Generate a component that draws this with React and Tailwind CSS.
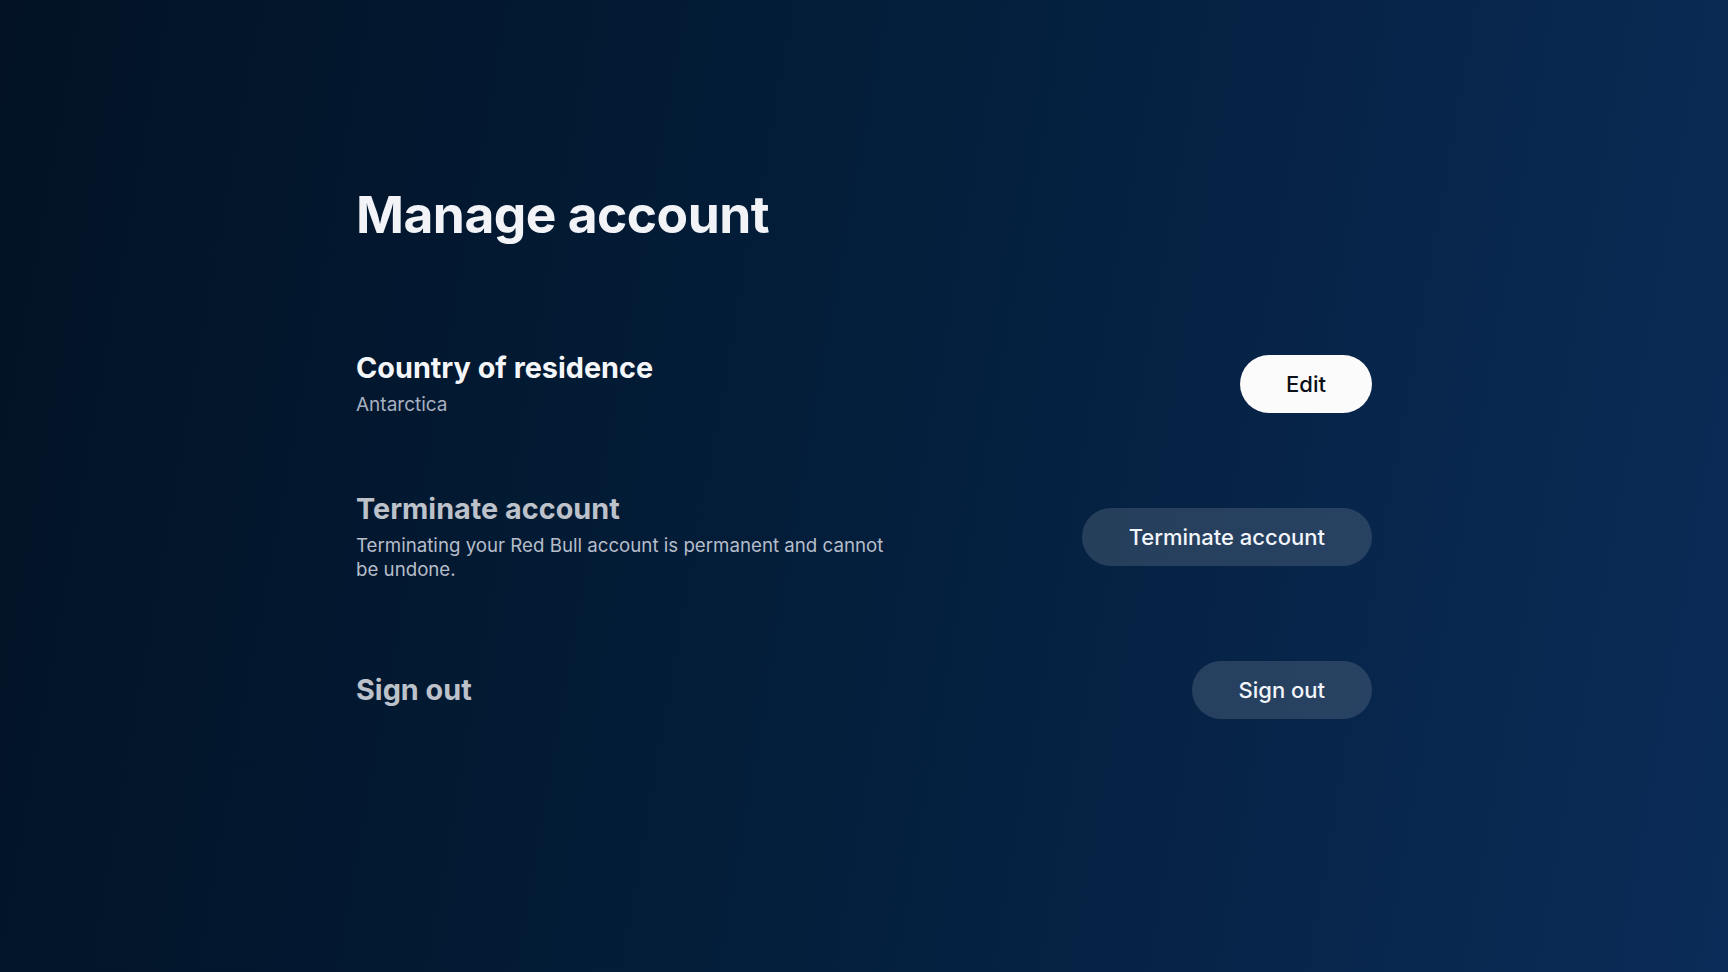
import React from "react";

function Row({ title, muted = false, children, action, className = "" }) {
  return (
    <div className={"flex items-center justify-between " + className}>
      <div>
        <h2
          className={
            muted
              ? "text-[28.8px] leading-[34px] font-bold text-[#bcc1ca]"
              : "text-[28.8px] leading-[34px] font-bold text-[#f4f6f9]"
          }
        >
          {title}
        </h2>
        {children}
      </div>
      {action}
    </div>
  );
}

function PillButton({ children, light = false }) {
  return (
    <button
      type="button"
      className={
        light
          ? "h-[58px] px-[46px] rounded-full bg-[#fbfbfc] text-[#0b0f17] text-[22px] font-medium"
          : "h-[58px] px-[47px] rounded-full bg-white/[0.13] text-[#f2f5fa] text-[22px] font-medium"
      }
    >
      {children}
    </button>
  );
}

export default function App() {
  return (
    <div
      className="h-[972px] w-full overflow-hidden bg-[linear-gradient(100deg,#021224_0%,#031d39_45%,#0b2c58_100%)]"
      style={{ fontFamily: "Inter, 'Noto Sans', sans-serif" }}
    >
      <div className="mx-auto w-[1016px] pt-[183px]">
        <h1 className="text-[51.5px] leading-[62px] font-bold tracking-[-0.01em] text-[#f1f3f7]">
          Manage account
        </h1>

        <div className="mt-[106px] flex flex-col">
          <Row title="Country of residence" action={<PillButton light>Edit</PillButton>}>
            <p className="mt-2 text-[19px] leading-[24px] text-[#a7b0c0]">Antarctica</p>
          </Row>

          <Row
            title="Terminate account"
            muted
            className="mt-[75px]"
            action={<PillButton>Terminate account</PillButton>}
          >
            <p className="mt-2 max-w-[540px] text-[18.7px] leading-[24px] text-[#b6bdca]">
              Terminating your Red Bull account is permanent and cannot be undone.
            </p>
          </Row>

          <Row
            title="Sign out"
            muted
            className="mt-[79px]"
            action={<PillButton>Sign out</PillButton>}
          />
        </div>
      </div>
    </div>
  );
}
